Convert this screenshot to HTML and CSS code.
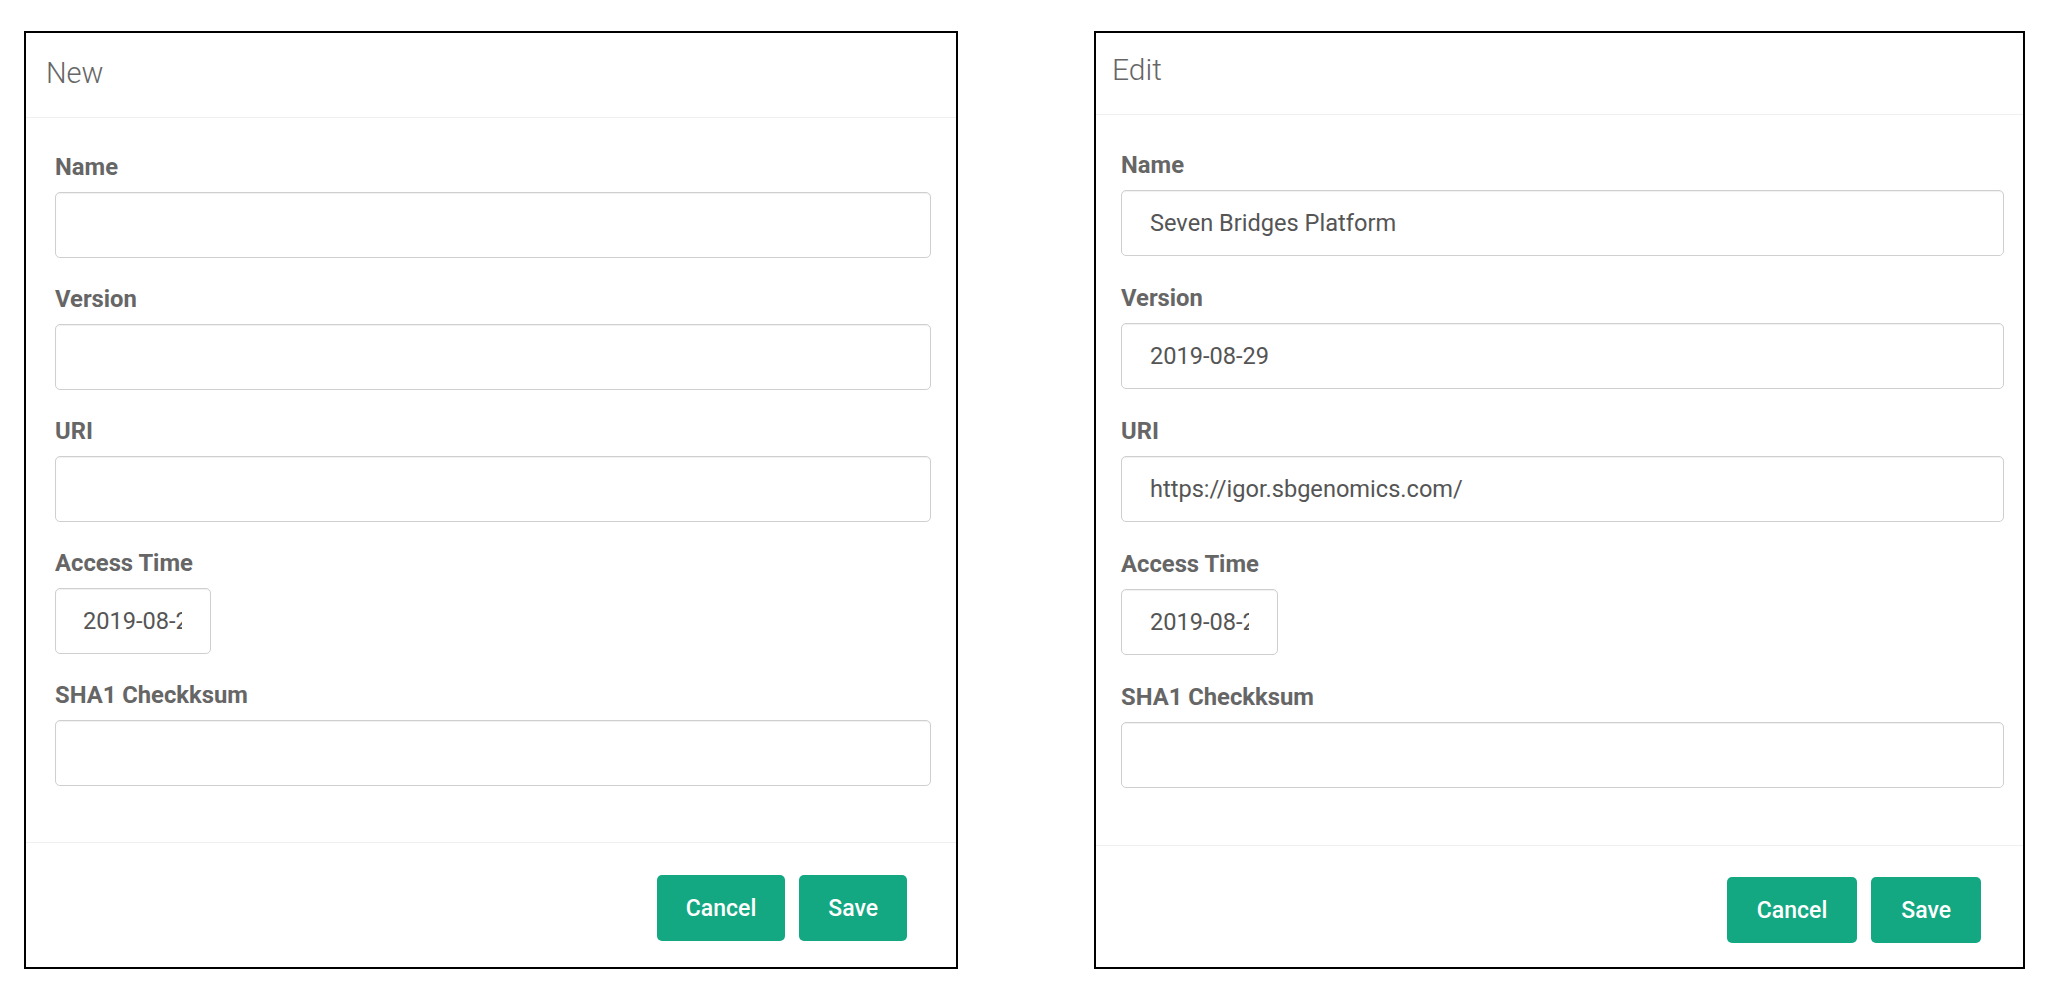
FILE: index.html
```html
<!DOCTYPE html>
<html lang="en">
<head>
<meta charset="utf-8">
<title>New / Edit</title>
<link rel="stylesheet" href="styles.css">
</head>
<body>
<div class="page">
  <section class="panel panel--new">
    <header class="panel-header"><h2 class="panel-title">New</h2></header>
    <div class="panel-body">
      <div class="field">
        <label class="field-label">Name</label>
        <input class="field-input" type="text" value="">
      </div>
      <div class="field">
        <label class="field-label">Version</label>
        <input class="field-input" type="text" value="">
      </div>
      <div class="field">
        <label class="field-label">URI</label>
        <input class="field-input" type="text" value="">
      </div>
      <div class="field">
        <label class="field-label">Access Time</label>
        <input class="field-input field-input--date" type="text" value="2019-08-29">
      </div>
      <div class="field">
        <label class="field-label">SHA1 Checkksum</label>
        <input class="field-input" type="text" value="">
      </div>
    </div>
    <footer class="panel-footer">
      <button class="btn btn--cancel" type="button">Cancel</button>
      <button class="btn btn--save" type="button">Save</button>
    </footer>
  </section>

  <section class="panel panel--edit">
    <header class="panel-header"><h2 class="panel-title">Edit</h2></header>
    <div class="panel-body">
      <div class="field">
        <label class="field-label">Name</label>
        <input class="field-input" type="text" value="Seven Bridges Platform">
      </div>
      <div class="field">
        <label class="field-label">Version</label>
        <input class="field-input" type="text" value="2019-08-29">
      </div>
      <div class="field">
        <label class="field-label">URI</label>
        <input class="field-input" type="text" value="https://igor.sbgenomics.com/">
      </div>
      <div class="field">
        <label class="field-label">Access Time</label>
        <input class="field-input field-input--date" type="text" value="2019-08-29">
      </div>
      <div class="field">
        <label class="field-label">SHA1 Checkksum</label>
        <input class="field-input" type="text" value="">
      </div>
    </div>
    <footer class="panel-footer">
      <button class="btn btn--cancel" type="button">Cancel</button>
      <button class="btn btn--save" type="button">Save</button>
    </footer>
  </section>
</div>
</body>
</html>
```

FILE: styles.css
```css
* {
  box-sizing: border-box;
}

html, body {
  margin: 0;
  padding: 0;
  background: #ffffff;
}

body {
  font-family: Roboto, "Liberation Sans", Arial, sans-serif;
  color: #555555;
}

.page {
  display: flex;
  align-items: flex-start;
  gap: 136px;
  padding: 31px 0 0 24px;
}

.panel {
  display: flex;
  flex-direction: column;
  height: 938px;
  border: 2px solid #000000;
  background: #ffffff;
}

.panel--new {
  width: 934px;
}

.panel--edit {
  width: 931px;
}

/* header */
.panel-header {
  border-bottom: 1px solid #efefef;
}

.panel--new .panel-header {
  height: 85px;
  padding: 23px 20px 0;
}

.panel--edit .panel-header {
  height: 82px;
  padding: 19px 16px 0;
}

.panel-title {
  margin: 0;
  font-weight: 300;
  color: #666666;
}

.panel--new .panel-title {
  font-size: 29px;
  line-height: 34px;
}

.panel--edit .panel-title {
  font-size: 30px;
  line-height: 35px;
}

/* body */
.panel-body {
  display: flex;
  flex-direction: column;
  border-bottom: 1px solid #efefef;
}

.panel--new .panel-body {
  gap: 26px;
  padding: 34px 25px 56px 29px;
}

.panel--edit .panel-body {
  gap: 27px;
  padding: 35px 19px 57px 25px;
}

.field {
  display: flex;
  flex-direction: column;
  align-items: flex-start;
}

.field-label {
  display: block;
  margin-bottom: 10px;
  font-size: 23.8px;
  line-height: 30px;
  font-weight: 700;
  color: #666666;
}

.field-input {
  display: block;
  width: 100%;
  height: 66px;
  margin: 0;
  padding: 0 26px 0 27px;
  font-family: Roboto, "Liberation Sans", Arial, sans-serif;
  font-size: 23.6px;
  color: #555555;
  background: #ffffff;
  border: 1px solid #cfcfcf;
  border-radius: 5px;
  box-shadow: inset 0 1px 1px rgba(0, 0, 0, 0.06);
  outline: none;
}

.panel--edit .field-input {
  padding-left: 28px;
}

.field-input--date {
  width: 156px;
  padding-right: 28px;
}

.panel--edit .field-input--date {
  width: 157px;
}

/* footer */
.panel-footer {
  flex: 1;
  display: flex;
  justify-content: flex-end;
  align-items: flex-start;
  gap: 14px;
}

.panel--new .panel-footer {
  padding: 32px 49px 0 0;
}

.panel--edit .panel-footer {
  padding: 31px 42px 0 0;
}

.btn {
  height: 66px;
  padding: 0 29px;
  font-family: Roboto, "Liberation Sans", Arial, sans-serif;
  font-size: 23px;
  font-weight: 500;
  color: #ffffff;
  background: #13a882;
  border: none;
  border-radius: 5px;
  cursor: pointer;
}

.panel--edit .btn {
  padding: 0 30px;
}
```
